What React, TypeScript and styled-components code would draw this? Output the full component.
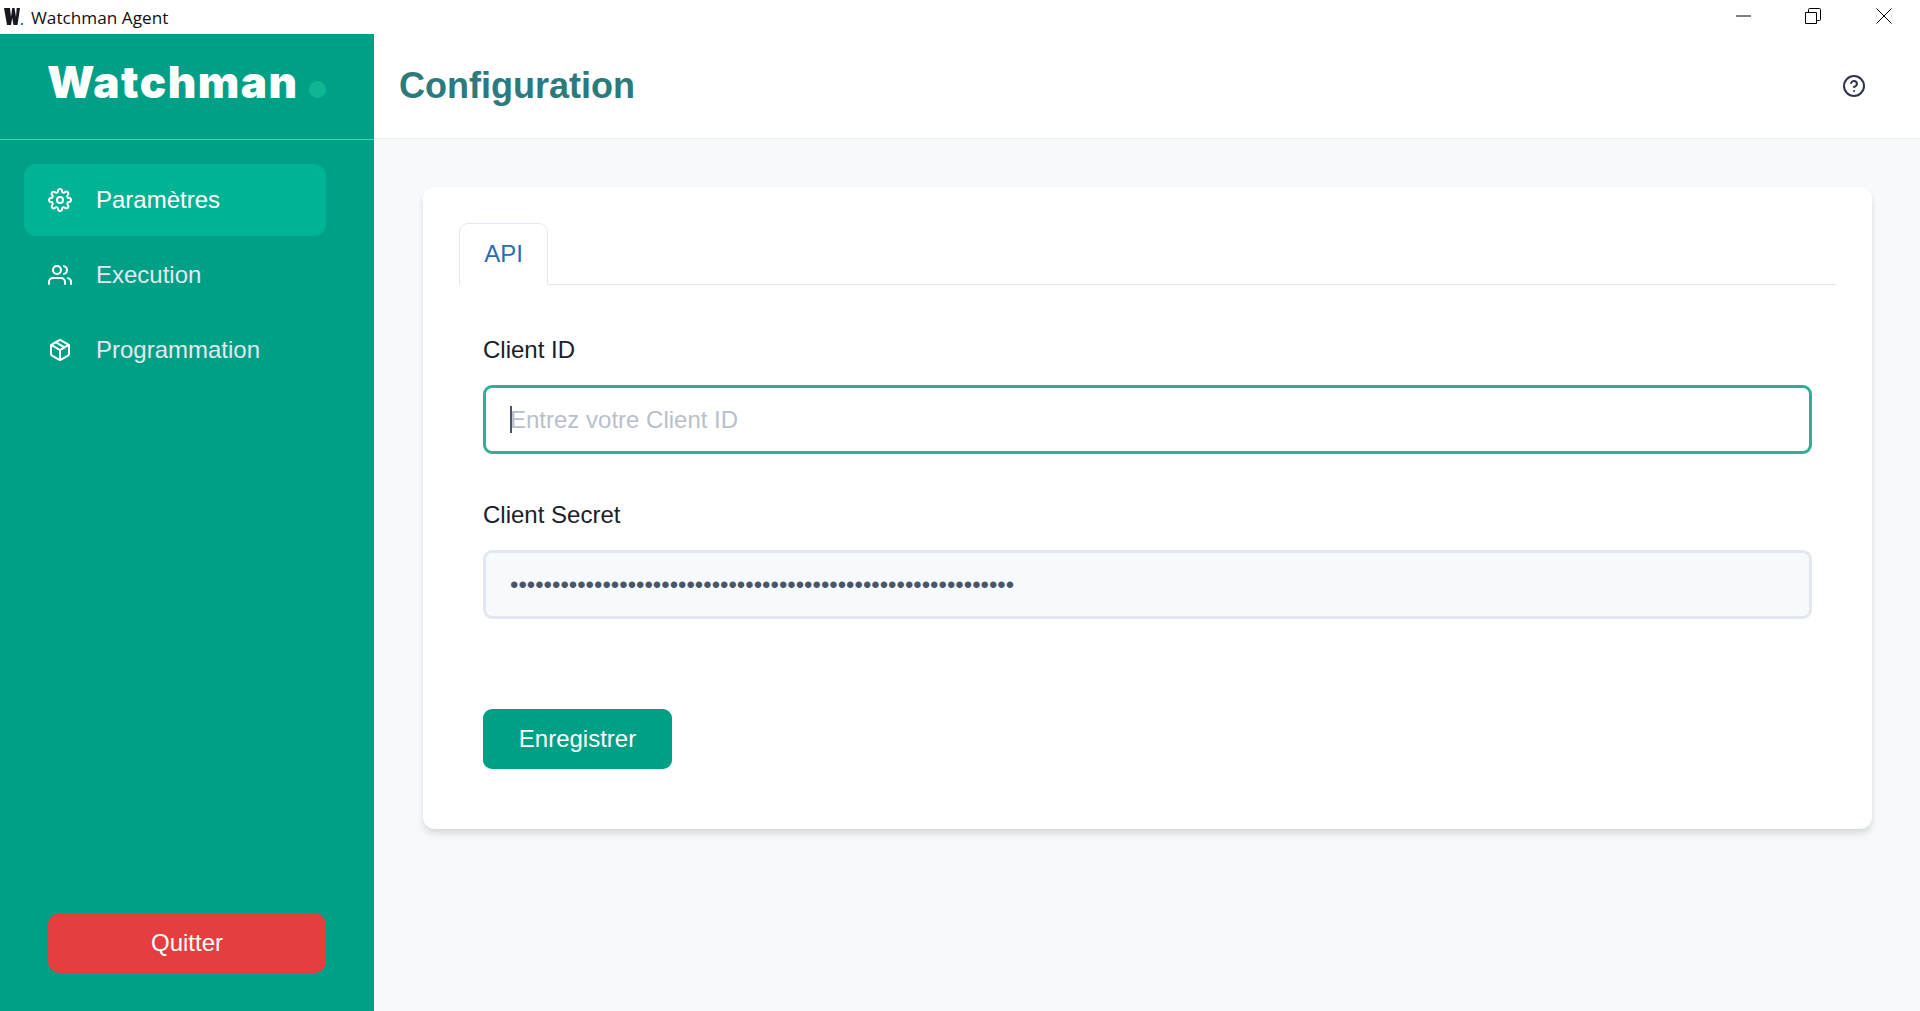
import React from 'react'
import { FiHelpCircle, FiPackage, FiSettings, FiUsers } from 'react-icons/fi'
import { type IconType } from 'react-icons'
import styled, { createGlobalStyle } from 'styled-components'

const GlobalStyle = createGlobalStyle`
  html, body {
    margin: 0;
    height: 100%;
    background: #ffffff;
    font-family: "Liberation Sans", Arial, sans-serif;
  }
  #root {
    height: 100%;
  }
  * {
    box-sizing: border-box;
  }
`

const Window = styled.div`
  display: flex;
  flex-direction: column;
  height: 1011px;
  overflow: hidden;
`
const TitleBar = styled.div`
  display: flex;
  align-items: center;
  flex: 0 0 34px;
  background: #ffffff;
  padding-left: 4px;
`
const AppLogo = styled.svg`
  width: 20px;
  height: 18px;
  margin-right: 7px;
`
const AppName = styled.span`
  font-family: "Open Sans", "Noto Sans", sans-serif;
  font-size: 17.2px;
  color: #101010;
`
const WindowControls = styled.div`
  display: flex;
  align-self: flex-start;
  margin-left: auto;
`
const WindowControl = styled.button<{ $wide?: boolean }>`
  display: flex;
  align-items: center;
  justify-content: center;
  width: ${(props) => (props.$wide ? '73px' : '69px')};
  height: 32px;
  padding: 0;
  border: 0;
  background: none;
`
const Body = styled.div`
  display: flex;
  flex: 1;
  min-height: 0;
`
const Sidebar = styled.aside`
  display: flex;
  flex-direction: column;
  flex: 0 0 374px;
  background: #00a086;
`
const LogoArea = styled.div`
  display: flex;
  align-items: flex-end;
  flex: 0 0 106px;
  padding: 0 48px 35px 47px;
  border-bottom: 1px solid rgba(255, 255, 255, 0.4);
`
const LogoText = styled.span`
  font-family: Inter, sans-serif;
  font-weight: 900;
  font-size: 44px;
  line-height: 44px;
  letter-spacing: 1.5px;
  color: #ffffff;
`
const LogoDot = styled.span`
  width: 17px;
  height: 17px;
  margin: 0 0 6px auto;
  border-radius: 50%;
  background: #10b594;
`
const Nav = styled.nav`
  display: flex;
  flex-direction: column;
  gap: 3px;
  padding: 24px 48px 0 24px;
`
const NavItem = styled.a<{ $active?: boolean }>`
  display: flex;
  align-items: center;
  gap: 24px;
  height: 72px;
  padding-left: 24px;
  border-radius: 12px;
  font-size: 24px;
  color: ${(props) => (props.$active ? '#ffffff' : '#e2e8f0')};
  background: ${(props) => (props.$active ? '#00b394' : 'transparent')};
`
const QuitButton = styled.button`
  height: 60px;
  margin: auto 48px 38px;
  border: 0;
  border-radius: 12px;
  font-family: inherit;
  font-size: 24px;
  color: #ffffff;
  background: #e53e3e;
`
const Main = styled.main`
  display: flex;
  flex-direction: column;
  flex: 1;
  min-width: 0;
  background: #f7fafc;
`
const Header = styled.header`
  display: flex;
  align-items: center;
  justify-content: space-between;
  flex: 0 0 105px;
  padding: 0 54px 0 25px;
  background: #ffffff;
  border-bottom: 1px solid #edf2f7;
`
const Title = styled.h1`
  margin: 0;
  font-size: 36px;
  font-weight: 700;
  color: #2c7a7b;
`
const HelpButton = styled.span`
  display: flex;
  color: #2d3748;
`
const Content = styled.div`
  padding: 48px 48px 0 49px;
`
const Card = styled.section`
  height: 642px;
  padding: 36px;
  border-radius: 12px;
  background: #ffffff;
  box-shadow: 0 6px 9px -1.5px rgba(0, 0, 0, 0.1), 0 3px 6px -1.5px rgba(0, 0, 0, 0.06);
`
const TabList = styled.div`
  display: flex;
  height: 62px;
  border-bottom: 1.5px solid #e2e8f0;
`
const Tab = styled.button`
  width: 89px;
  height: 62px;
  border: 1.5px solid #e2e8f0;
  border-bottom-color: #ffffff;
  border-radius: 9px 9px 0 0;
  font-family: inherit;
  font-size: 24px;
  color: #2b6cb0;
  background: #ffffff;
`
const Form = styled.form`
  display: flex;
  flex-direction: column;
  align-items: flex-start;
  padding: 47px 24px 0;
`
const Field = styled.div`
  position: relative;
  width: 100%;
  margin-bottom: 43px;
`
const Label = styled.label`
  display: block;
  margin-bottom: 17px;
  font-size: 24px;
  line-height: 36px;
  color: #1a202c;
`
const Input = styled.input<{ $focused?: boolean }>`
  display: block;
  width: 100%;
  height: 69px;
  padding: 0 24px;
  border: 3px solid ${(props) => (props.$focused ? '#33ad97' : '#e2e8f0')};
  border-radius: 9px;
  outline: none;
  font-family: inherit;
  font-size: 24px;
  color: #4a5568;
  background: ${(props) => (props.$focused ? '#ffffff' : '#f7fafc')};
  &::placeholder {
    color: #b9bfca;
    opacity: 1;
  }
`
const Caret = styled.span`
  position: absolute;
  left: 27px;
  top: 74px;
  width: 2px;
  height: 27px;
  background: #4a5568;
`
const SaveButton = styled.button`
  width: 189px;
  height: 60px;
  margin-top: 47px;
  border: 0;
  border-radius: 9px;
  font-family: inherit;
  font-size: 24px;
  color: #ffffff;
  background: #00a086;
`

type NavConfig = {
  Icon: IconType
  label: string
  active?: boolean
}

const NAV_ITEMS: NavConfig[] = [
  { Icon: FiSettings, label: 'Paramètres', active: true },
  { Icon: FiUsers, label: 'Execution' },
  { Icon: FiPackage, label: 'Programmation' },
]

const App = () => (
  <Window>
    <GlobalStyle />
    <TitleBar>
      <AppLogo viewBox='0 0 20 18'>
        <path d='M0 0H6L7 9 8.2 0H10.5L12 9 12.7 0H16L13.5 17H9.5L8.2 10 7 17H3Z' fill='#16181d' />
        <rect x='17' y='15' width='2' height='2' fill='#0b8f6f' />
      </AppLogo>
      <AppName>Watchman Agent</AppName>
      <WindowControls>
        <WindowControl aria-label='Réduire'>
          <svg width='16' height='16' viewBox='0 0 16 16'>
            <path d='M0 8h15' stroke='#000' strokeWidth='1' />
          </svg>
        </WindowControl>
        <WindowControl aria-label='Restaurer'>
          <svg width='16' height='16' viewBox='0 0 16 16'>
            <path d='M.5 4.5h11v11H.5zM3.5 4.5v-3a1 1 0 0 1 1-1h10a1 1 0 0 1 1 1v10a1 1 0 0 1-1 1h-3' fill='none' stroke='#000' />
          </svg>
        </WindowControl>
        <WindowControl $wide aria-label='Fermer'>
          <svg width='16' height='16' viewBox='0 0 16 16'>
            <path d='M.5.5l15 15M15.5.5l-15 15' stroke='#000' />
          </svg>
        </WindowControl>
      </WindowControls>
    </TitleBar>
    <Body>
      <Sidebar>
        <LogoArea>
          <LogoText>Watchman</LogoText>
          <LogoDot />
        </LogoArea>
        <Nav>
          {NAV_ITEMS.map(({ Icon, label, active }) => (
            <NavItem key={label} $active={active}>
              <Icon size={24} color='#ffffff' />
              {label}
            </NavItem>
          ))}
        </Nav>
        <QuitButton>Quitter</QuitButton>
      </Sidebar>
      <Main>
        <Header>
          <Title>Configuration</Title>
          <HelpButton>
            <FiHelpCircle size={24} />
          </HelpButton>
        </Header>
        <Content>
          <Card>
            <TabList>
              <Tab>API</Tab>
            </TabList>
            <Form>
              <Field>
                <Label>Client ID</Label>
                <Input $focused placeholder='Entrez votre Client ID' readOnly />
                <Caret />
              </Field>
              <Field>
                <Label>Client Secret</Label>
                <Input type='password' value={'x'.repeat(60)} readOnly />
              </Field>
              <SaveButton type='button'>Enregistrer</SaveButton>
            </Form>
          </Card>
        </Content>
      </Main>
    </Body>
  </Window>
)

export default App
